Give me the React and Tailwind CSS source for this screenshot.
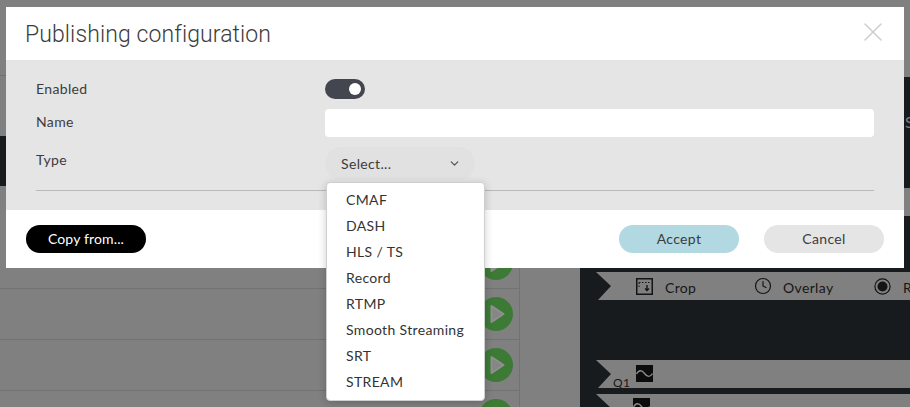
import React from "react";
import { X, ChevronDown, Clock } from "lucide-react";

const BODY = "font-['Lato','Noto_Sans',sans-serif] tracking-[0.35px]";

function Play() {
  return (
    <svg width="34" height="34" viewBox="0 0 34 34" className="mr-[6px]">
      <circle cx="17" cy="17" r="17" fill="#3c7a36" />
      <path d="M12.5 9 L24.5 17 L12.5 25 Z" fill="#868686" stroke="#909090" strokeWidth="2" strokeLinejoin="round" />
    </svg>
  );
}

function Row() {
  return (
    <div className="flex h-[51px] w-[520px] shrink-0 items-center justify-end border-r border-b border-[#727272]">
      <Play />
    </div>
  );
}

function CropIcon() {
  return (
    <svg width="17" height="17" viewBox="0 0 17 17" fill="none">
      <rect x="0.75" y="0.75" width="15.5" height="15.5" stroke="#141414" strokeWidth="1.5" />
      <path d="M3 4.5H14M3 4.5V10" stroke="#141414" strokeDasharray="1.5 1.5" />
      <path d="M11 7v5M9 10.5l2 2 2-2" stroke="#141414" strokeWidth="1.4" />
    </svg>
  );
}

function RadioIcon() {
  return (
    <svg width="17" height="17" viewBox="0 0 17 17" fill="none">
      <circle cx="8.5" cy="8.5" r="7.6" stroke="#141414" strokeWidth="1.2" />
      <circle cx="8.5" cy="8.5" r="5" fill="#141414" />
    </svg>
  );
}

function WaveIcon() {
  return (
    <svg width="17" height="17" viewBox="0 0 17 17">
      <rect width="17" height="17" fill="#0c0c0c" />
      <path d="M0.5 9C3 4.5 6 5 8.5 8.5S14 12.5 16.5 8.5" fill="none" stroke="#8c8c8c" strokeWidth="1.3" />
    </svg>
  );
}

function Banner({ children, className = "" }) {
  return (
    <div
      className={`flex h-[28px] shrink-0 bg-[#808080] [clip-path:polygon(0_0,100%_0,100%_100%,2px_100%,15px_50%)] ${className}`}
    >
      {children}
    </div>
  );
}

function Tool({ icon, label, gap = "gap-[12px]" }) {
  return (
    <div className={`flex w-[119px] shrink-0 items-center ${gap} text-[14px] text-[#161616]`}>
      {icon}
      <span className="mt-[3px] whitespace-nowrap">{label}</span>
    </div>
  );
}

const OPTIONS = ["CMAF", "DASH", "HLS / TS", "Record", "RTMP", "Smooth Streaming", "SRT", "STREAM"];

export default function App() {
  return (
    <div className={`relative h-[407px] w-[910px] overflow-hidden bg-[#808080] ${BODY}`}>
      {/* page behind the modal */}
      <div className="flex h-full">
        <div className="flex w-[580px] shrink-0 flex-col">
          <div className="h-[76px] shrink-0 border-b border-[#727272]" />
          <div className="mt-[60px] h-[50px] w-[6px] shrink-0 bg-[#171b1e]" />
          <div className="mt-[52px] flex flex-col">
            <Row />
            <Row />
            <Row />
            <Row />
          </div>
        </div>
        <div className="flex min-w-0 flex-1 flex-col">
          <div className="mt-[77px] h-[111px] shrink-0 overflow-hidden bg-[#171b1e] pt-[33px] pl-[325px] text-[16px] text-[#808080]">
            S
          </div>
          <div className="mt-[28px] flex flex-1 flex-col overflow-hidden bg-[#171b1e] pt-[56px] pl-[16px]">
            <Banner className="items-center pl-[40px]">
              <Tool icon={<CropIcon />} label="Crop" />
              <Tool icon={<Clock size={18} color="#141414" strokeWidth={1.6} className="-ml-px" />} label="Overlay" gap="gap-[11px]" />
              <Tool icon={<RadioIcon />} label="R" />
            </Banner>
            <Banner className="mt-[60px] pl-[17px]">
              <span className="mt-[14px] text-[12px] text-[#161616]">Q1</span>
              <span className="mt-[5px] ml-[6px]">
                <WaveIcon />
              </span>
            </Banner>
            <Banner className="mt-[6px] pl-[37px]">
              <span className="mt-[4px]">
                <WaveIcon />
              </span>
            </Banner>
          </div>
        </div>
      </div>

      {/* modal */}
      <div className="absolute top-[7px] left-[6px] flex h-[261px] w-[898px] flex-col bg-white">
        <div className="flex h-[53px] shrink-0 items-center justify-between pr-[15px] pl-[19px]">
          <h1 className="mt-[3px] font-['Roboto',sans-serif] text-[23px] font-light tracking-[0.1px] text-[#3c3c3c]">
            Publishing configuration
          </h1>
          <span className="mb-[3px]">
            <X size={32} color="#cccccc" strokeWidth={1.1} />
          </span>
        </div>
        <div className="flex h-[150px] shrink-0 flex-col gap-[10px] bg-[#e5e5e5] px-[30px] pt-[19px] text-[14px] text-[#3c3c3c]">
          <div className="flex h-[20px] items-center">
            <span className="mb-[2px] w-[289px]">Enabled</span>
            <span className="flex h-[20px] w-[40px] items-center justify-end rounded-full bg-[#43464e] pr-[4px]">
              <span className="h-[12px] w-[12px] rounded-full bg-white" />
            </span>
          </div>
          <div className="flex h-[28px] items-center">
            <span className="mb-[4px] w-[289px]">Name</span>
            <input className="h-[28px] flex-1 rounded-[4px] bg-white outline-none" />
          </div>
          <div className="flex h-[33px] items-start">
            <span className="mt-[2px] w-[289px]">Type</span>
            <div className="flex h-[33px] w-[150px] items-center justify-between rounded-full bg-[#e1e1e1] pr-[14px] pl-[16px]">
              <span className="mb-[1px]">Select...</span>
              <ChevronDown size={13} color="#555555" strokeWidth={2.4} />
            </div>
          </div>
          <div className="h-px bg-[#b9b9b9]" />
        </div>
        <div className="flex flex-1 items-center justify-between pr-[20px] pb-[1px] pl-[20px] text-[14px]">
          <button className="h-[28px] w-[120px] rounded-full bg-black tracking-[0.15px] text-white">Copy from...</button>
          <div className="flex gap-[25px] text-[#3c3c3c]">
            <button className="h-[28px] w-[120px] rounded-full bg-[#b2d8e1]">Accept</button>
            <button className="h-[28px] w-[120px] rounded-full bg-[#e5e5e5]">Cancel</button>
          </div>
        </div>
      </div>

      {/* open dropdown */}
      <ul className="absolute top-[182px] left-[326px] w-[159px] rounded-[4px] border border-[#cfcfcf] bg-white pt-[3px] pb-[6px] text-[14px] text-[#333333] shadow-[0_2px_8px_rgba(0,0,0,0.2)]">
        {OPTIONS.map((o) => (
          <li key={o} className="flex h-[26px] items-center pl-[19px] whitespace-nowrap">
            {o}
          </li>
        ))}
      </ul>
    </div>
  );
}
